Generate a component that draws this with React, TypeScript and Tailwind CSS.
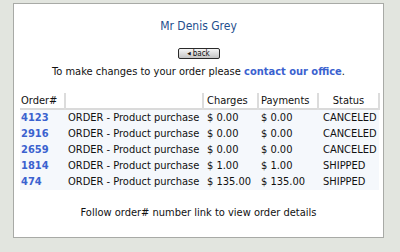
const orders = [
  { id: "4123", desc: "ORDER - Product purchase", charges: "$ 0.00", payments: "$ 0.00", status: "CANCELED" },
  { id: "2916", desc: "ORDER - Product purchase", charges: "$ 0.00", payments: "$ 0.00", status: "CANCELED" },
  { id: "2659", desc: "ORDER - Product purchase", charges: "$ 0.00", payments: "$ 0.00", status: "CANCELED" },
  { id: "1814", desc: "ORDER - Product purchase", charges: "$ 1.00", payments: "$ 1.00", status: "SHIPPED" },
  { id: "474", desc: "ORDER - Product purchase", charges: "$ 135.00", payments: "$ 135.00", status: "SHIPPED" },
];

const font = { fontFamily: '"DejaVu Sans Condensed", "DejaVu Sans", sans-serif' };

export default function App() {
  return (
    <div className="w-[400px] h-[252px] bg-[#e2e5df] pt-[3px] pl-[13px]" style={font}>
      <div className="w-[371px] h-[235px] bg-white border border-[#a8aaa6] text-[#111] text-[11px]">
        <div className="pt-[14px] text-center text-[12px] leading-[16px] text-[#1f4f8e]">Mr Denis Grey</div>

        <div className="mt-[14px] flex justify-center">
          <button className="w-[42px] h-[11px] flex items-center justify-center gap-[2px] rounded-[2px] border border-[#2a2a2a] bg-gradient-to-b from-[#f6f6f6] to-[#c4c4c4] text-[8px] leading-none text-[#111]">
            <span className="text-[5px]">◀</span>
            <span>back</span>
          </button>
        </div>

        <p className="mt-[5px] text-center leading-[16px]">
          To make changes to your order please{" "}
          <a className="font-bold text-[#3b62cf]">contact our office</a>.
        </p>

        <table className="mt-[13px] ml-[6px] w-[359px] border-collapse table-fixed">
          <colgroup>
            <col className="w-[45px]" />
            <col className="w-[138px]" />
            <col className="w-[55px]" />
            <col className="w-[60px]" />
            <col className="w-[61px]" />
          </colgroup>
          <thead>
            <tr className="h-[16px] leading-[15px] border-b-2 border-[#dadada]">
              <th className="text-left font-normal pl-[1px] border-r-2 border-[#dcdcdc]">Order#</th>
              <th className="border-r-2 border-[#dcdcdc]"></th>
              <th className="text-left font-normal pl-[3px] border-r-2 border-[#dcdcdc]">Charges</th>
              <th className="text-left font-normal pl-[2px] border-r-2 border-[#dcdcdc]">Payments</th>
              <th className="text-center font-normal border-r-2 border-[#dcdcdc]">Status</th>
            </tr>
          </thead>
          <tbody className="bg-[#f5f8fc]">
            {orders.map((o) => (
              <tr key={o.id} className="h-[16px] leading-[16px]">
                <td className="pl-[1px] font-bold text-[#3b62cf]">{o.id}</td>
                <td className="pl-[3px] whitespace-nowrap">{o.desc}</td>
                <td className="pl-[4px] whitespace-nowrap">{o.charges}</td>
                <td className="pl-[3px] whitespace-nowrap">{o.payments}</td>
                <td className="pl-[5px]">{o.status}</td>
              </tr>
            ))}
          </tbody>
        </table>

        <p className="mt-[15px] text-center leading-[16px]">Follow order# number link to view order details</p>
      </div>
    </div>
  );
}
